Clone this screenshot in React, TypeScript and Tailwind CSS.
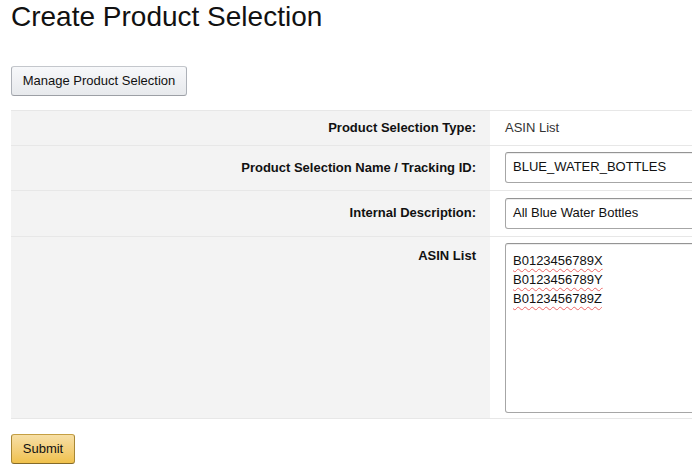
const rows = [
  { label: "Product Selection Type:", kind: "text", value: "ASIN List", pad: "" },
  { label: "Product Selection Name / Tracking ID:", kind: "input", value: "BLUE_WATER_BOTTLES", pad: "pt-[6px] pb-[7px]" },
  { label: "Internal Description:", kind: "input", value: "All Blue Water Bottles", pad: "py-[7px]" },
];

const asins = ["B0123456789X", "B0123456789Y", "B0123456789Z"];

export default function App() {
  return (
    <main className="w-[692px] h-[475px] overflow-hidden bg-white text-[#111] font-['Liberation_Sans',Arial,sans-serif]">
      <div className="w-[900px] pl-[11px]">
        <h1 className="text-[28px] leading-[1.2] font-normal text-[#111]">Create Product Selection</h1>

        <button className="mt-[32px] h-[30px] w-[176px] rounded-[3px] border border-[#adb1b8] border-t-[#c4c7cc] border-b-[#9c9fa5] bg-gradient-to-b from-[#f7f8fa] to-[#e7e9ec] text-[13px] text-[#111]">
          Manage Product Selection
        </button>

        <div className="mt-[14px] w-[800px] border-b border-[#e7e7e7]">
          {rows.map((r) => (
            <div key={r.label} className="grid grid-cols-[479px_1fr] border-t border-[#e7e7e7]">
              <div className="bg-[#f3f3f3] pr-[14px] flex items-center justify-end text-[13px] font-bold">
                {r.label}
              </div>
              {r.kind === "text" ? (
                <div className="pl-[15px] h-[34px] flex items-center text-[13px] text-[#333]">{r.value}</div>
              ) : (
                <div className={"pl-[15px] " + r.pad}>
                  <div className="w-[300px] h-[31px] flex items-center px-[7px] rounded-[3px] border border-[#a6a6a6] border-t-[#949494] shadow-[inset_0_1px_0_rgba(0,0,0,0.07)] text-[13px] text-[#111]">
                    {r.value}
                  </div>
                </div>
              )}
            </div>
          ))}
          <div className="grid grid-cols-[479px_1fr] border-t border-[#e7e7e7]">
            <div className="bg-[#f3f3f3] pr-[14px] pt-[9px] text-right text-[13px] font-bold">ASIN List</div>
            <div className="pl-[15px] pt-[6px] pb-[5px]">
              <div className="w-[300px] h-[170px] px-[7px] pt-[7px] rounded-[3px] border border-[#a6a6a6] border-t-[#949494] shadow-[inset_0_1px_0_rgba(0,0,0,0.07)] text-[13px] leading-[19px] text-[#111]">
                {asins.map((a) => (
                  <div key={a}>
                    <span className="underline decoration-wavy decoration-[#e66] decoration-1 underline-offset-[3px]">{a}</span>
                  </div>
                ))}
              </div>
            </div>
          </div>
        </div>

        <button className="mt-[15px] h-[30px] w-[64px] rounded-[3px] border border-[#a88734] border-t-[#c59f43] border-b-[#846a29] bg-gradient-to-b from-[#f7dfa5] to-[#f0c14b] text-[13px] text-[#111]">
          Submit
        </button>
      </div>
    </main>
  );
}
